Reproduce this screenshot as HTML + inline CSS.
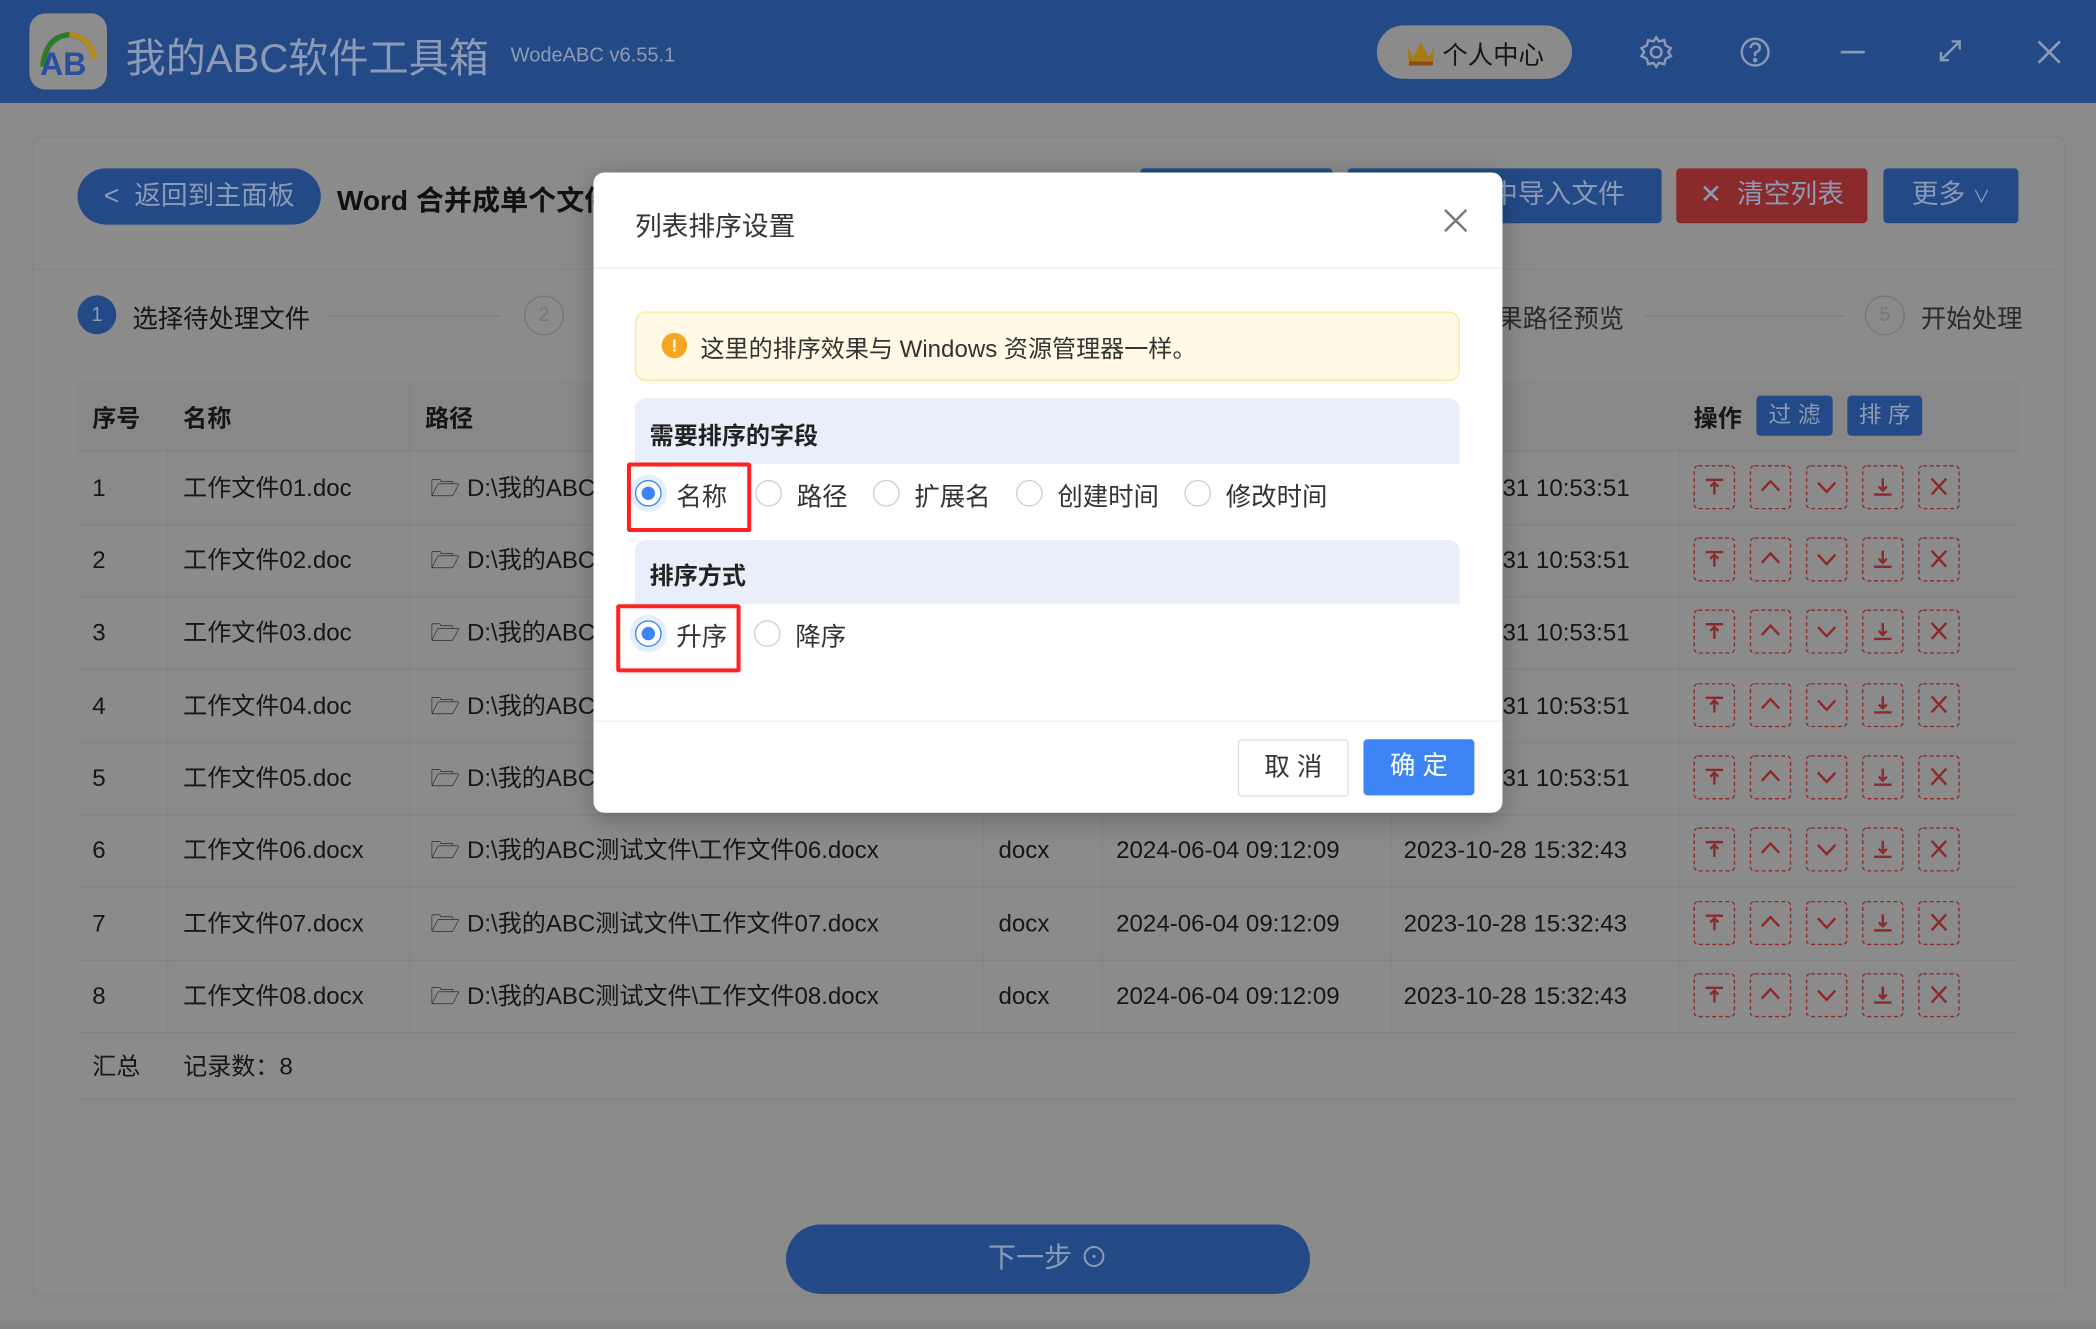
<!DOCTYPE html>
<html><head><meta charset="utf-8">
<style>
html,body{margin:0;padding:0;width:2096px;height:1329px;overflow:hidden;background:#8a8a8a;}
#w{position:absolute;left:0;top:0;width:1568px;height:994px;transform:scale(1.33673);transform-origin:0 0;font-family:"Liberation Sans","Noto Sans CJK SC",sans-serif;color:#161616;}
.a{position:absolute;}
.hd{left:0;top:0;width:1568px;height:77px;background:#234a87;}
.t{white-space:nowrap;}
.btn{position:absolute;border-radius:3px;color:#8c9bb5;font-size:20px;text-align:center;}
.row{position:absolute;left:58px;width:1452px;height:54px;border-bottom:1px solid #828282;font-size:18px;}
.row span{position:absolute;top:0;line-height:54px;white-space:nowrap;}
.vl{position:absolute;top:285px;width:1px;height:487px;background:#848484;}
.rd{position:absolute;width:18px;height:18px;border:1px solid #d0d0d0;border-radius:50%;background:#fff;}
.rd.on{border-color:#3d85f5;box-shadow:0 0 0 4px #e6effd;}
.rd.on::after{content:"";position:absolute;left:4px;top:4px;width:10px;height:10px;border-radius:50%;background:#3d85f5;}
.lb{position:absolute;font-size:19px;color:#333;white-space:nowrap;}
</style></head><body><div id="w">
<div class="a hd"></div>
<div class="a" style="left:22px;top:10px;width:58px;height:57px;border-radius:12px;background:#8d8d8d;"></div>
<svg class="a" style="left:22px;top:10px" width="58" height="57" viewBox="0 0 58 57">
<path d="M10 40 Q12 18 29 16 Q45 17 49 34" fill="none" stroke="#2d7a2d" stroke-width="4"/>
<path d="M30 16 Q45 17 49 34" fill="none" stroke="#b58a1a" stroke-width="4"/>
<text x="8" y="46" font-size="24" font-weight="bold" fill="#2a4fa0" font-family="Liberation Sans">AB</text>
</svg>
<div class="a t" style="left:94px;top:19px;font-size:30px;color:#8c9bb5;">我的ABC软件工具箱</div>
<div class="a t" style="left:382px;top:33px;font-size:15px;color:#8c9bb5;">WodeABC v6.55.1</div>
<div class="a" style="left:1030px;top:19px;width:146px;height:40px;border-radius:20px;background:#8b8b8b;"></div>
<svg class="a" style="left:1050px;top:27px" width="26" height="24"><path d="M3 8 L7 16 L13 5 L19 16 L23 8 L22 20 L4 20Z" fill="#a77a14"/><rect x="4" y="19" width="18" height="3" fill="#8a4a1a"/></svg>
<div class="a t" style="left:1079px;top:27px;font-size:19px;color:#161616;">个人中心</div>
<svg class="a" style="left:1226px;top:26px" width="26" height="26" fill="none" stroke="#8c9bb5" stroke-width="1.8"><circle cx="13" cy="13" r="4"/><path d="M13 2 L15 5 L19 4 L20 8 L24 10 L22 13 L24 16 L20 18 L19 22 L15 21 L13 24 L11 21 L7 22 L6 18 L2 16 L4 13 L2 10 L6 8 L7 4 L11 5Z"/></svg>
<svg class="a" style="left:1300px;top:26px" width="26" height="26" fill="none" stroke="#8c9bb5" stroke-width="1.8"><circle cx="13" cy="13" r="10"/><path d="M9.5 10 Q10 6.5 13 6.5 Q16.5 6.5 16.5 10 Q16.5 12 13 13.5 L13 16"/><circle cx="13" cy="19" r="0.8" fill="#8c9bb5"/></svg>
<div class="a" style="left:1377px;top:38px;width:18px;height:2px;background:#8c9bb5;"></div>
<svg class="a" style="left:1449px;top:28px" width="20" height="20" fill="none" stroke="#8c9bb5" stroke-width="1.8"><path d="M3 17 L17 3 M11 3 L17 3 L17 9 M3 11 L3 17 L9 17"/></svg>
<svg class="a" style="left:1523px;top:29px" width="20" height="20" fill="none" stroke="#8c9bb5" stroke-width="2"><path d="M2 2 L18 18 M18 2 L2 18"/></svg>

<div class="a" style="left:24px;top:102px;width:1519px;height:866px;border:1px solid #858585;border-radius:6px;background:#8b8b8b;"></div>
<div class="a" style="left:25px;top:201px;width:1517px;height:1px;background:#858585;"></div>
<div class="btn" style="left:58px;top:126px;width:182px;height:42px;border-radius:21px;background:#234a87;line-height:42px;">&lt;&nbsp; 返回到主面板</div>
<div class="a t" style="left:252px;top:134px;font-size:21px;font-weight:bold;color:#111;">Word 合并成单个文件</div>
<div class="btn" style="left:853px;top:126px;width:144px;height:41px;background:#234a87;"></div>
<div class="btn" style="left:1008px;top:126px;width:235px;height:41px;line-height:41px;background:#234a87;">从文件夹中导入文件</div>
<div class="btn" style="left:1254px;top:126px;width:143px;height:41px;line-height:41px;background:#8b2a2a;">✕&nbsp; 清空列表</div>
<div class="btn" style="left:1409px;top:126px;width:101px;height:41px;line-height:41px;background:#234a87;">更多 <span style="font-size:13px">∨</span></div>

<div class="a" style="left:58px;top:221px;width:29px;height:29px;border-radius:50%;background:#234a87;color:#8c9bb5;font-size:15px;text-align:center;line-height:29px;">1</div>
<div class="a t" style="left:99px;top:224px;font-size:19px;">选择待处理文件</div>
<div class="a" style="left:245px;top:236px;width:130px;height:1px;background:#7f7f7f;"></div>
<div class="a" style="left:392px;top:221px;width:28px;height:28px;border-radius:50%;border:1px solid #777;color:#777;font-size:15px;text-align:center;line-height:28px;">2</div>
<div class="a t" style="left:1120px;top:224px;font-size:19px;color:#2a2a2a;">果路径预览</div>
<div class="a" style="left:1230px;top:236px;width:150px;height:1px;background:#7f7f7f;"></div>
<div class="a" style="left:1395px;top:221px;width:28px;height:28px;border-radius:50%;border:1px solid #777;color:#777;font-size:15px;text-align:center;line-height:28px;">5</div>
<div class="a t" style="left:1437px;top:224px;font-size:19px;color:#2a2a2a;">开始处理</div>

<div class="a" style="left:58px;top:285px;width:1452px;height:52px;background:#888;border-bottom:1px solid #828282;"></div>
<div class="a t" style="left:69px;top:299px;font-size:18px;font-weight:bold;">序号</div>
<div class="a t" style="left:137px;top:299px;font-size:18px;font-weight:bold;">名称</div>
<div class="a t" style="left:318px;top:299px;font-size:18px;font-weight:bold;">路径</div>
<div class="a t" style="left:1267px;top:299px;font-size:18px;font-weight:bold;">操作</div>
<div class="btn" style="left:1314px;top:296px;width:57px;height:30px;line-height:30px;font-size:17px;background:#234a87;">过 滤</div>
<div class="btn" style="left:1382px;top:296px;width:56px;height:30px;line-height:30px;font-size:17px;background:#234a87;">排 序</div>
<div class="vl" style="left:125px"></div><div class="vl" style="left:306px"></div><div class="vl" style="left:735px"></div><div class="vl" style="left:824px"></div><div class="vl" style="left:1040px"></div><div class="vl" style="left:1256px"></div>

<div class="row" style="top:338px"><span style="left:11px">1</span><span style="left:79px">工作文件01.doc</span><span style="left:264px">🗁 D:\我的ABC测试文件\工作文件01.doc</span><span style="left:1066px">31 10:53:51</span></div>
<div class="row" style="top:392px"><span style="left:11px">2</span><span style="left:79px">工作文件02.doc</span><span style="left:264px">🗁 D:\我的ABC</span><span style="left:1066px">31 10:53:51</span></div>
<div class="row" style="top:446px"><span style="left:11px">3</span><span style="left:79px">工作文件03.doc</span><span style="left:264px">🗁 D:\我的ABC</span><span style="left:1066px">31 10:53:51</span></div>
<div class="row" style="top:501px"><span style="left:11px">4</span><span style="left:79px">工作文件04.doc</span><span style="left:264px">🗁 D:\我的ABC</span><span style="left:1066px">31 10:53:51</span></div>
<div class="row" style="top:555px"><span style="left:11px">5</span><span style="left:79px">工作文件05.doc</span><span style="left:264px">🗁 D:\我的ABC</span><span style="left:1066px">31 10:53:51</span></div>
<div class="row" style="top:609px"><span style="left:11px">6</span><span style="left:79px">工作文件06.docx</span><span style="left:264px">🗁 D:\我的ABC测试文件\工作文件06.docx</span><span style="left:689px">docx</span><span style="left:777px">2024-06-04 09:12:09</span><span style="left:992px">2023-10-28 15:32:43</span></div>
<div class="row" style="top:664px"><span style="left:11px">7</span><span style="left:79px">工作文件07.docx</span><span style="left:264px">🗁 D:\我的ABC测试文件\工作文件07.docx</span><span style="left:689px">docx</span><span style="left:777px">2024-06-04 09:12:09</span><span style="left:992px">2023-10-28 15:32:43</span></div>
<div class="row" style="top:718px"><span style="left:11px">8</span><span style="left:79px">工作文件08.docx</span><span style="left:264px">🗁 D:\我的ABC测试文件\工作文件08.docx</span><span style="left:689px">docx</span><span style="left:777px">2024-06-04 09:12:09</span><span style="left:992px">2023-10-28 15:32:43</span></div>
<div class="row" style="top:772px;height:50px"><span style="left:11px;line-height:52px">汇总</span><span style="left:79px;line-height:52px">记录数：8</span></div>

<svg class="a" style="left:0;top:0" width="1568" height="994">
<defs>
<g id="ic" fill="none" stroke="#8b2a2a" stroke-width="1.8">
<rect x="0.5" y="0.5" width="30" height="32" rx="3" stroke-dasharray="3 2" stroke-width="1"/>
<path d="M9 11 H22 M15.5 13 V22 M12.5 16 L15.5 13 L18.5 16"/>
<path transform="translate(42 0)" d="M9 19 L15.5 12 L22 19"/>
<rect transform="translate(42 0)" x="0.5" y="0.5" width="30" height="32" rx="3" stroke-dasharray="3 2" stroke-width="1"/>
<path transform="translate(84 0)" d="M9 13 L15.5 20 L22 13"/>
<rect transform="translate(84 0)" x="0.5" y="0.5" width="30" height="32" rx="3" stroke-dasharray="3 2" stroke-width="1"/>
<path transform="translate(126 0)" d="M9 22 H22 M15.5 10 V19 M12.5 16 L15.5 19 L18.5 16"/>
<rect transform="translate(126 0)" x="0.5" y="0.5" width="30" height="32" rx="3" stroke-dasharray="3 2" stroke-width="1"/>
<path transform="translate(168 0)" d="M10 10 L21 22 M21 10 L10 22"/>
<rect transform="translate(168 0)" x="0.5" y="0.5" width="30" height="32" rx="3" stroke-dasharray="3 2" stroke-width="1"/>
</g></defs>
<use href="#ic" x="1267" y="348"/><use href="#ic" x="1267" y="402"/><use href="#ic" x="1267" y="456"/><use href="#ic" x="1267" y="511"/><use href="#ic" x="1267" y="565"/><use href="#ic" x="1267" y="619"/><use href="#ic" x="1267" y="674"/><use href="#ic" x="1267" y="728"/>
</svg>

<div class="a" style="left:588px;top:916px;width:392px;height:52px;border-radius:26px;background:#234a87;color:#8c9bb5;font-size:21px;text-align:center;line-height:52px;">下一步 ⊙</div>
<div class="a" style="left:0;top:988px;width:1568px;height:6px;background:#838383;"></div>

<div class="a" style="left:444px;top:129px;width:680px;height:479px;background:#fff;border-radius:8px;box-shadow:0 4px 20px rgba(0,0,0,0.25);"></div>
<div class="a t" style="left:475px;top:153px;font-size:20px;color:#333;">列表排序设置</div>
<svg class="a" style="left:1079px;top:155px" width="20" height="20" fill="none" stroke="#777" stroke-width="1.8"><path d="M2 2 L18 18 M18 2 L2 18"/></svg>
<div class="a" style="left:444px;top:200px;width:680px;height:1px;background:#ececec;"></div>
<div class="a" style="left:475px;top:233px;width:615px;height:50px;background:#fff9e6;border:1px solid #fce7a0;border-radius:8px;"></div>
<div class="a" style="left:495px;top:249px;width:19px;height:19px;border-radius:50%;background:#f5a623;color:#fff;font-size:13px;text-align:center;line-height:19px;font-weight:bold;">!</div>
<div class="a t" style="left:524px;top:247px;font-size:18px;color:#333;">这里的排序效果与 Windows 资源管理器一样。</div>
<div class="a" style="left:475px;top:298px;width:617px;height:49px;background:#e8effb;border-radius:8px 8px 0 0;"></div>
<div class="a t" style="left:486px;top:312px;font-size:18px;font-weight:bold;color:#222;">需要排序的字段</div>
<div class="rd on" style="left:475px;top:359px"></div><div class="lb" style="left:506px;top:357px">名称</div>
<div class="rd" style="left:565px;top:359px"></div><div class="lb" style="left:596px;top:357px">路径</div>
<div class="rd" style="left:653px;top:359px"></div><div class="lb" style="left:684px;top:357px">扩展名</div>
<div class="rd" style="left:760px;top:359px"></div><div class="lb" style="left:791px;top:357px">创建时间</div>
<div class="rd" style="left:886px;top:359px"></div><div class="lb" style="left:917px;top:357px">修改时间</div>
<div class="a" style="left:469px;top:346px;width:87px;height:46px;border:3px solid #f22;border-radius:2px;"></div>
<div class="a" style="left:475px;top:404px;width:617px;height:48px;background:#e8effb;border-radius:8px 8px 0 0;"></div>
<div class="a t" style="left:486px;top:417px;font-size:18px;font-weight:bold;color:#222;">排序方式</div>
<div class="rd on" style="left:475px;top:464px"></div><div class="lb" style="left:506px;top:462px">升序</div>
<div class="rd" style="left:564px;top:464px"></div><div class="lb" style="left:595px;top:462px">降序</div>
<div class="a" style="left:461px;top:452px;width:87px;height:45px;border:3px solid #f22;border-radius:2px;"></div>
<div class="a" style="left:444px;top:539px;width:680px;height:1px;background:#ececec;"></div>
<div class="a" style="left:926px;top:553px;width:81px;height:41px;border:1px solid #ddd;border-radius:3px;font-size:19px;color:#333;text-align:center;line-height:41px;">取 消</div>
<div class="a" style="left:1020px;top:553px;width:83px;height:42px;background:#3d85f5;border-radius:3px;font-size:19px;color:#fff;text-align:center;line-height:42px;">确 定</div>
</div></body></html>
